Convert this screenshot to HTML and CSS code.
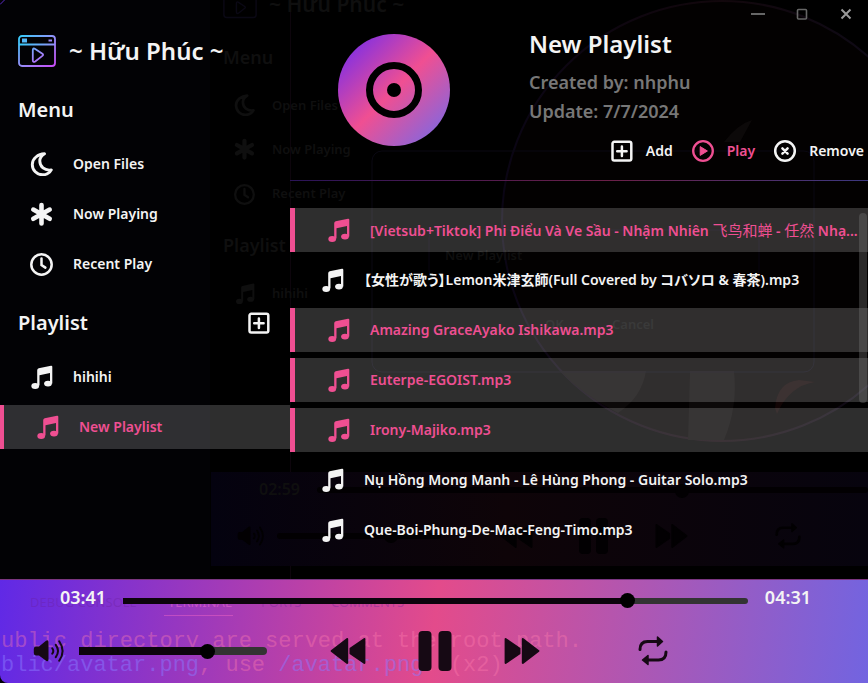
FILE: index.html
```html
<!DOCTYPE html>
<html lang="vi">
<head>
<meta charset="utf-8">
<meta name="viewport" content="width=device-width, initial-scale=1">
<title>Music Player</title>
<link rel="stylesheet" href="styles.css">
</head>
<body>
<svg class="defs" width="0" height="0" aria-hidden="true">
  <defs>
    <symbol id="music" viewBox="0 0 24 24">
      <path d="M8.2 5.2Q8.2 3.700 9.700 3.300L22 .7Q23.300.5 23.300 1.800V18.500H21V7.900L10.500 10.200V20.600H8.200Z"/>
      <ellipse cx="6.200" cy="21" rx="3.900" ry="2.900"/>
      <ellipse cx="19" cy="18.600" rx="3.900" ry="2.900"/>
    </symbol>
    <symbol id="moon" viewBox="0 0 24 24">
      <path fill="none" stroke="currentColor" stroke-width="2.900" stroke-linejoin="round" d="M15.500 2.300C9 2.600 3.300 7 3.300 12.900c0 5.900 4.500 10.400 10.300 10.400 3.800 0 6.900-1.700 8.700-4.900C15.500 19.500 10.800 15 10.800 9.500c0-3 2-5.500 4.700-7.200z" transform="translate(0 -.5)"/>
    </symbol>
    <symbol id="star" viewBox="0 0 24 24">
      <path fill="none" stroke="currentColor" stroke-width="4.600" stroke-linecap="round" d="M12.500 3v18.400M4.300 7.600l16.400 9.200M20.700 7.600L4.300 16.800"/>
    </symbol>
    <symbol id="clock" viewBox="0 0 24 24">
      <g fill="none" stroke="currentColor" stroke-width="2.500" stroke-linecap="round"><circle cx="12.500" cy="12.500" r="10.200"/><path d="M12.500 6.500v6.500l3.900 2.600"/></g>
    </symbol>
    <symbol id="plus" viewBox="0 0 24 24">
      <g fill="none" stroke="currentColor" stroke-width="2.500"><rect x="2.500" y="2.800" width="18.800" height="18.800" rx="1.800"/><path d="M11.900 7.500v9.400M7.200 12.200h9.400" stroke-linecap="round"/></g>
    </symbol>
    <symbol id="play" viewBox="0 0 24 24">
      <circle cx="12" cy="12" r="9.800" fill="none" stroke="currentColor" stroke-width="2.300"/><path d="M9.200 7.600v8.800L16.400 12z" stroke="currentColor" stroke-linejoin="round"/>
    </symbol>
    <symbol id="remove" viewBox="0 0 24 24">
      <g fill="none" stroke="currentColor" stroke-width="2.500" stroke-linecap="round"><circle cx="12" cy="12" r="9.800"/><path d="M9.400 9.400l5.200 5.200M14.600 9.400l-5.200 5.200"/></g>
    </symbol>
    <symbol id="volume" viewBox="0 0 32 24">
      <path d="M2.800 7.500H6L13 1.700Q15.500.4 15.500 3V20.600Q15.500 23.300 13 21.800L6 16.400H2.800Q.8 16.400.8 14V10Q.8 7.500 2.800 7.500Z"/>
      <g fill="none" stroke="currentColor" stroke-width="2" stroke-linecap="round"><path d="M19.300 9.300q2 2.700 0 5.400M22.800 5.800q4.400 6.200 0 12.400M26.200 2.200q6.800 9.800 0 19.600"/></g>
    </symbol>
    <symbol id="next" viewBox="0 0 36 28">
      <path stroke="currentColor" stroke-width="2" stroke-linejoin="round" d="M1.600 2L15.500 11.500V16.500L1.600 26ZM18.800 2L34.400 14 18.800 26Z"/>
    </symbol>
    <symbol id="repeat" viewBox="0 0 32 32">
      <g fill="none" stroke="currentColor" stroke-width="3" stroke-linecap="round"><path d="M3 14.500q0-8 7.500-8H22M29 17q0 8-7.500 8H10"/></g>
      <path stroke="currentColor" stroke-width="1.500" stroke-linejoin="round" d="M20.500 2L25.500 6.500 20.500 11ZM11 20.500L5.500 25 11 29.500Z"/>
    </symbol>
    <symbol id="window" viewBox="0 0 38 32">
      <g fill="none" stroke="currentColor" stroke-width="1.600"><rect x="1" y="1" width="36" height="30" rx="3"/><path d="M1 9.500h36M15 15.500q0-2.800 2.300-1.400l7 4.700q1.300 1 0 2l-7 5.500q-2.300 1.300-2.300-1.500z"/></g>
    </symbol>
    <linearGradient id="brand" x1="0" y1="0" x2="1" y2="1"><stop offset="0" stop-color="#35cdfb"/><stop offset=".5" stop-color="#9490fa"/><stop offset="1" stop-color="#c94bf8"/></linearGradient>
    <linearGradient id="disc" x1="0" y1="0" x2="1" y2="1"><stop offset="0" stop-color="#6528f7"/><stop offset=".5" stop-color="#f04f92"/><stop offset="1" stop-color="#6b6cf0"/></linearGradient>
    <linearGradient id="dim"><stop offset="0" stop-color="#04020f"/><stop offset=".45" stop-color="#0e0408"/><stop offset="1" stop-color="#07040e"/></linearGradient>
    <linearGradient id="dimring"><stop offset="0" stop-color="#0a0514"/><stop offset=".5" stop-color="#12070c"/><stop offset="1" stop-color="#0d0b1a"/></linearGradient>
  </defs>
</svg>

<div class="app">
  <!-- Windows showing faintly through the translucent surface -->
  <svg class="backdrop" width="868" height="579" aria-hidden="true">
    <rect x="210" width="658" height="579" fill="#000"/>
    <circle cx="722" cy="221" r="220" fill="#030101" stroke="url(#dimring)" stroke-width="2"/>
    <g fill="#0c0909"><path d="M560 371h86q-4 26-28 42-35-18-58-42zM690 371h44q4 36-10 69h-36z"/><path d="M724 142q14-18 28-22l-12 22z"/></g>
    <path d="M775 408q2-26 24-28l16 2q-26 4-38 32z" fill="#120505"/>
    <rect x="372" y="151" width="442" height="221" rx="10" fill="none" stroke="#0a0812"/>
    <rect x="429" y="230" width="330" height="48" rx="8" fill="none" stroke="#080510"/>
    <path d="M290.500 0V579" stroke="#0d050c"/>
    <rect x="211" y="472" width="657" height="94" fill="url(#dim)"/>
    <g fill="#0f0f0f" color="#0f0f0f">
      <use href="#window" x="223" y="-11" width="34" height="30" color="#0a0814"/>
      <use href="#moon" x="233" y="94" width="22" height="22"/>
      <use href="#star" x="233" y="138" width="22" height="22"/>
      <use href="#clock" x="233" y="183" width="22" height="22"/>
      <use href="#music" x="234" y="283" width="21" height="21"/>
      <text x="269" y="12" class="dim-brand">~ Hữu Phúc ~</text>
      <text x="223" y="64" class="dim-head">Menu</text>
      <text x="272" y="110" class="dim-text">Open Files</text>
      <text x="272" y="154" class="dim-text">Now Playing</text>
      <text x="272" y="198" class="dim-text">Recent Play</text>
      <text x="223" y="252" class="dim-head">Playlist</text>
      <text x="272" y="298" class="dim-text">hihihi</text>
      <text x="445" y="260" class="dim-text">New Playlist</text>
      <text x="545" y="329" class="dim-text">OK</text>
      <text x="612" y="329" class="dim-text">Cancel</text>
      <text x="259" y="495" class="dim-time">02:59</text>
    </g>
    <g fill="#020002" color="#020002">
      <rect x="317" y="487" width="551" height="6" rx="3"/><circle cx="682" cy="491" r="7"/>
      <use href="#volume" x="237" y="525" width="28" height="22"/>
      <rect x="277" y="533" width="164" height="6" rx="3"/><circle cx="391" cy="536" r="7"/>
      <use href="#next" x="655" y="523" width="33" height="26"/>
      <use href="#next" x="-533" y="523" width="33" height="26" transform="scale(-1 1)"/>
      <rect x="579" y="518" width="12" height="36" rx="4"/><rect x="596" y="518" width="12" height="36" rx="4"/>
      <use href="#repeat" x="774" y="522" width="28" height="28"/>
    </g>
    <path d="M0 4.500L4.500 0" stroke="#5a2bc4" fill="none"/>
  </svg>

  <aside class="sidebar">
    <div class="brand">
      <svg width="38" height="32" viewBox="0 0 38 32" aria-hidden="true">
        <g fill="none" stroke="url(#brand)" stroke-width="1.800"><rect x="1" y="1" width="36" height="30" rx="3"/><path d="M1 9.500h36.100M14.800 15.500q0-3 2.400-1.500l7.200 4.800q1.400 1 0 2.100l-7.200 5.500q-2.400 1.500-2.400-1.500z"/></g>
        <rect x="4" y="3.500" width="5" height="4" fill="#55b8f8"/><path d="M30.500 5.500h3.500" stroke="#9b86f8" stroke-width="2"/>
      </svg>
      <h1>~ Hữu Phúc ~</h1>
    </div>

    <div class="section-head"><h2>Menu</h2></div>
    <nav class="list" aria-label="Menu">
      <a class="item" href="#open"><svg class="icon"><use href="#moon"/></svg><span>Open Files</span></a>
      <a class="item" href="#now"><svg class="icon"><use href="#star"/></svg><span>Now Playing</span></a>
      <a class="item" href="#recent"><svg class="icon"><use href="#clock"/></svg><span>Recent Play</span></a>
    </nav>

    <div class="section-head">
      <h2>Playlist</h2>
      <button class="btn" type="button" aria-label="New playlist"><svg class="icon"><use href="#plus"/></svg></button>
    </div>
    <nav class="list" aria-label="Playlist">
      <a class="item" href="#hihihi"><svg class="icon"><use href="#music"/></svg><span>hihihi</span></a>
      <a class="item active" href="#new" aria-current="page"><svg class="icon"><use href="#music"/></svg><span>New Playlist</span></a>
    </nav>
  </aside>

  <main class="main">
    <div class="titlebar">
      <button class="btn" type="button" aria-label="Minimize"><svg width="14" height="14"><path d="M0 7h14" stroke="currentColor" stroke-width="2"/></svg></button>
      <button class="btn" type="button" aria-label="Maximize"><svg width="14" height="14"><rect x="2.500" y="2.500" width="9" height="9.500" rx="1" fill="none" stroke="currentColor" stroke-width="1.600"/></svg></button>
      <button class="btn close" type="button" aria-label="Close"><svg width="14" height="14"><path d="M2.500 2.500l9 9M11.500 2.500l-9 9" stroke="currentColor" stroke-width="2"/></svg></button>
    </div>

    <header class="header">
      <svg class="disc" viewBox="0 0 112 112" aria-hidden="true">
        <circle cx="56" cy="56" r="56" fill="url(#disc)"/>
        <circle cx="56" cy="56" r="24.500" fill="none" stroke="#000" stroke-width="7"/>
        <circle cx="56" cy="56" r="7" fill="#000"/>
      </svg>
      <div class="info">
        <h2>New Playlist</h2>
        <p>Created by: nhphu</p>
        <p>Update: 7/7/2024</p>
        <div class="actions">
          <button class="btn" type="button"><svg class="icon"><use href="#plus"/></svg>Add</button>
          <button class="btn accent" type="button"><svg class="icon"><use href="#play"/></svg>Play</button>
          <button class="btn" type="button"><svg class="icon"><use href="#remove"/></svg>Remove</button>
        </div>
      </div>
    </header>

    <div class="tracks">
      <ul class="list">
        <li class="item active"><svg class="icon"><use href="#music"/></svg><span>[Vietsub+Tiktok] Phi Điểu Và Ve Sầu - Nhậm Nhiên <span lang="zh">飞鸟和蝉</span> - <span lang="zh">任然</span> Nhạ...</span></li>
        <li class="item"><svg class="icon"><use href="#music"/></svg><span lang="ja">【女性が歌う】Lemon米津玄師(Full Covered by コバソロ &amp; 春茶).mp3</span></li>
        <li class="item active"><svg class="icon"><use href="#music"/></svg><span>Amazing GraceAyako Ishikawa.mp3</span></li>
        <li class="item active"><svg class="icon"><use href="#music"/></svg><span>Euterpe-EGOIST.mp3</span></li>
        <li class="item active"><svg class="icon"><use href="#music"/></svg><span>Irony-Majiko.mp3</span></li>
        <li class="item"><svg class="icon"><use href="#music"/></svg><span>Nụ Hồng Mong Manh - Lê Hùng Phong - Guitar Solo.mp3</span></li>
        <li class="item"><svg class="icon"><use href="#music"/></svg><span>Que-Boi-Phung-De-Mac-Feng-Timo.mp3</span></li>
      </ul>
      <div class="scroll-thumb"></div>
    </div>
  </main>

  <footer class="player">
    <svg class="terminal" width="868" height="103" aria-hidden="true">
      <g class="tabs"><text x="30" y="27">DEBUG CONSOLE</text><text x="168" y="27" class="tab-on">TERMINAL</text><text x="261" y="27">PORTS</text><text x="331" y="27">COMMENTS</text></g>
      <path d="M164 35.500h69" stroke="#ff6ec8" stroke-opacity=".4"/>
      <g class="output"><text x="1" y="67">ublic directory are served at the root path.</text><text x="1" y="91"><tspan class="path">blic/avatar.png</tspan>, use <tspan class="path">/avatar.png</tspan>. (x2)</text></g>
    </svg>
    <div class="seek">
      <span>03:41</span>
      <input class="range" type="range" aria-label="Seek" min="0" max="271" value="221" style="--fill:81.500%">
      <span>04:31</span>
    </div>
    <div class="controls">
      <div class="volume">
        <button class="btn" type="button" aria-label="Mute"><svg width="32" height="24"><use href="#volume"/></svg></button>
        <input class="range" type="range" aria-label="Volume" min="0" max="100" value="70" style="--fill:70%">
      </div>
      <div class="transport">
        <button class="btn" type="button" aria-label="Previous"><svg class="flip" width="36" height="28"><use href="#next"/></svg></button>
        <button class="btn" type="button" aria-label="Pause"><svg width="34" height="40"><rect x=".5" width="13" height="40" rx="4"/><rect x="20.500" width="13" height="40" rx="4"/></svg></button>
        <button class="btn" type="button" aria-label="Next"><svg width="36" height="28"><use href="#next"/></svg></button>
      </div>
      <div class="modes">
        <button class="btn" type="button" aria-label="Repeat"><svg width="32" height="32"><use href="#repeat"/></svg></button>
      </div>
    </div>
  </footer>
</div>
</body>
</html>
```
FILE: styles.css
```css
:root {
  --accent: #ef4f92;
  --text: #f4f4f4;
  --muted: #777;
  --row: rgba(255, 255, 255, 0.18);
}

* { box-sizing: border-box; }

body {
  margin: 0;
  background: #020205;
  color: var(--text);
  font: 600 14px/24px "Noto Sans", "Open Sans", "Noto Sans CJK JP", sans-serif;
}

[lang="ja"] {
  font-family: "Noto Sans", "Noto Sans CJK JP", sans-serif;
  font-feature-settings: "palt";
}

[lang="zh"] {
  font-family: "Noto Sans CJK SC", sans-serif;
  font-size: 15px;
  font-weight: 400;
}

h1, h2, p, ul { margin: 0; padding: 0; font-weight: 600; }

svg { display: block; flex: none; fill: currentColor; }

.defs { position: absolute; }

.icon { width: 24px; height: 24px; }

.btn {
  display: flex;
  align-items: center;
  gap: 12px;
  padding: 0;
  border: 0;
  background: none;
  color: inherit;
  font: inherit;
  cursor: pointer;
}

.app {
  position: relative;
  isolation: isolate;
  display: grid;
  grid-template: 1fr auto / 290px minmax(0, 1fr);
  min-height: 100vh;
  overflow: hidden;
}

.backdrop { position: absolute; z-index: -1; top: 0; left: 0; }

.dim-brand { font-size: 21px; }
.dim-head { font-size: 18px; }
.dim-text { font-size: 13px; }
.dim-time { font-size: 16px; }

/* Sidebar */

.sidebar { padding-top: 29px; }

.brand {
  display: flex;
  align-items: center;
  gap: 13px;
  height: 44px;
  padding-left: 18px;
}

.brand h1 { font-size: 24px; line-height: 32px; white-space: nowrap; }

.section-head {
  display: flex;
  align-items: center;
  justify-content: space-between;
  padding: 22px 19px 17px 18px;
}

.section-head h2 { font-size: 20px; line-height: 30px; }

.list {
  display: flex;
  flex-direction: column;
  gap: 6px;
  list-style: none;
}

.item {
  display: flex;
  align-items: center;
  gap: 20px;
  height: 44px;
  padding-left: 29px;
  color: inherit;
  text-decoration: none;
  white-space: nowrap;
  overflow: hidden;
}

.item.active {
  padding-left: 31px;
  border-left: 4px solid var(--accent);
  background: var(--row);
  color: var(--accent);
}

/* Playlist */

.titlebar {
  display: flex;
  justify-content: flex-end;
  align-items: center;
  gap: 30px;
  height: 28px;
  padding-right: 15px;
  color: #666;
}

.titlebar .close { color: #999; }

.header {
  display: flex;
  gap: 79px;
  padding: 0 4px 17px 48px;
  border-bottom: 1px solid;
  border-image: linear-gradient(90deg, #2a1458, #6b2048 55%, #3c3880) 1;
}

.disc { width: 112px; height: 112px; margin-top: 6px; }

.info { flex: 1; }
.info h2 { margin-bottom: 8px; font-size: 24px; line-height: 32px; }
.info p { color: var(--muted); font-size: 18px; line-height: 29px; }

.actions {
  display: flex;
  justify-content: flex-end;
  gap: 18px;
  margin-top: 13px;
}

.accent { color: var(--accent); }

.tracks { position: relative; padding-top: 27px; }
.tracks .item { padding-left: 30px; }
.tracks .item.active { padding-left: 31px; border-left-width: 5px; }

.scroll-thumb {
  position: absolute;
  top: 32px;
  right: 1px;
  width: 8px;
  height: 190px;
  border-radius: 4px;
  background: rgba(120, 120, 120, 0.35);
}

/* Player */

.player {
  position: relative;
  grid-column: 1 / -1;
  padding: 5px 57px 12px 33px;
  border-top: 1px solid #7a3580;
  border-bottom-left-radius: 8px;
  background: linear-gradient(96deg, #6029e6, #e34b8b 50%, #7264e0);
}

.terminal { position: absolute; top: 0; left: 0; }
.tabs { fill: #6a1f9a; fill-opacity: 0.35; font-size: 13px; font-weight: 400; }
.tab-on { fill: #f070d0; fill-opacity: 0.5; }
.output { fill: #ff7cae; fill-opacity: 0.4; font: 400 22px "Liberation Mono", monospace; }
.path { fill: #8a78ff; fill-opacity: 0.5; }

.seek {
  position: relative;
  display: flex;
  align-items: center;
  gap: 17px;
  padding-left: 27px;
  font-size: 18px;
}

.seek .range { flex: 1; height: 6px; margin: 7px 0 0; }

.controls {
  position: relative;
  display: grid;
  grid-template-columns: 297px auto 1fr;
  align-items: center;
  margin-top: 22px;
  color: #160914;
}

.controls .btn { min-height: 40px; }
.volume, .transport { display: flex; align-items: center; }
.volume { gap: 14px; }
.volume .range { width: 188px; height: 8px; }
.transport { gap: 52px; }
.modes { padding-left: 97px; }
.flip { transform: scaleX(-1); }

.range {
  appearance: none;
  min-width: 0;
  margin: 0;
  border-radius: 0 4px 4px 0;
  background: linear-gradient(90deg, #0c040c var(--fill), #333 var(--fill));
}

.range::-webkit-slider-thumb {
  appearance: none;
  width: 15px;
  height: 15px;
  border-radius: 50%;
  background: #000;
}
```
